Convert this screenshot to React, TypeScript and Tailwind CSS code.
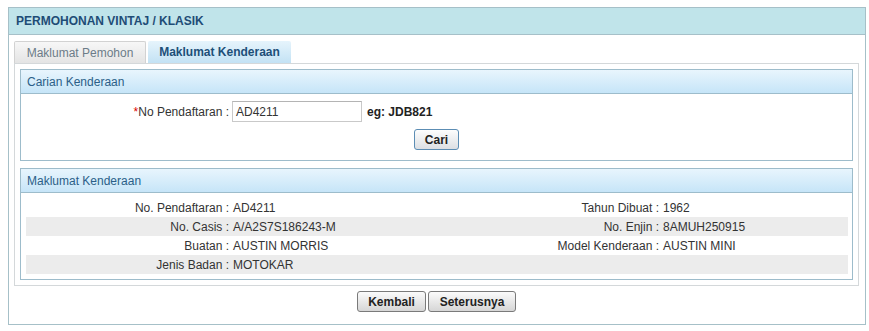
import React from "react";

const rows: [string, string, string, string][] = [
  ["No. Pendaftaran :", "AD4211", "Tahun Dibuat :", "1962"],
  ["No. Casis :", "A/A2S7S186243-M", "No. Enjin :", "8AMUH250915"],
  ["Buatan :", "AUSTIN MORRIS", "Model Kenderaan :", "AUSTIN MINI"],
  ["Jenis Badan :", "MOTOKAR", "", ""],
];

function FieldsetHeader({ title }: { title: string }) {
  return (
    <div className="flex h-[24px] items-center border-b border-[#9dbccb] bg-gradient-to-b from-[#e8f5fd] to-[#c6e5f8] pl-[6px] text-[12px] text-[#2b5f88]">
      {title}
    </div>
  );
}

function GrayButton({ label, width }: { label: string; width: string }) {
  return (
    <button
      className={`h-[21px] ${width} rounded-[3px] border border-[#7a7a7a] bg-gradient-to-b from-[#fbfbfb] to-[#d6d6d6] text-[12px] font-bold text-[#222]`}
    >
      {label}
    </button>
  );
}

export default function App() {
  return (
    <div className="h-[331px] w-[869px] bg-white pl-[8px] pt-[7px] font-['Liberation_Sans',Arial,sans-serif] text-[12px] text-[#333]">
      <div className="h-[318px] w-[858px] border border-[#a6c0c8]">
        <div className="flex h-[27px] items-center border-b border-[#a6c0c8] bg-[#c0e4ea] pl-[7px] text-[12px] font-bold text-[#1e4c76]">
          PERMOHONAN VINTAJ / KLASIK
        </div>

        <div className="pl-[5px] pt-[6px]">
          {/* tabs */}
          <div className="flex h-[22px] gap-[2px]">
            <div className="flex w-[132px] items-center justify-center rounded-t-[2px] border border-b-0 border-[#d2d2d2] bg-gradient-to-b from-[#f7f7f7] to-[#e4e4e4] text-[12px] text-[#6c7c88]">
              Maklumat Pemohon
            </div>
            <div className="flex w-[143px] items-center justify-center rounded-t-[2px] bg-gradient-to-b from-[#e6f4fc] to-[#c3e2f4] text-[12px] font-bold text-[#1d4f78]">
              Maklumat Kenderaan
            </div>
          </div>

          {/* tab panel */}
          <div className="h-[223px] w-[845px] border border-[#d4d8da] px-[5px] pt-[5px]">
            <div className="h-[92px] border border-[#9dbccb]">
              <FieldsetHeader title="Carian Kenderaan" />
              <div className="grid grid-cols-[205px_1fr] px-[5px] pt-[7px]">
                <div className="flex h-[21px] items-center justify-end pr-[2px]">
                  <span className="text-[#d00]">*</span>No Pendaftaran :
                </div>
                <div className="flex items-center pl-[1px]">
                  <div className="flex h-[21px] w-[130px] items-center border border-[#c9c9c9] border-t-[#b4b4b4] pl-[3px]">
                    AD4211
                  </div>
                  <span className="ml-[5px] font-bold text-[#222]">eg: JDB821</span>
                </div>
              </div>
              <div className="mt-[7px] flex justify-center">
                <button className="h-[21px] w-[45px] rounded-[3px] border border-[#5c8db4] bg-gradient-to-b from-[#fdfdfd] to-[#dcdfe3] text-[12px] font-bold text-[#222]">
                  Cari
                </button>
              </div>
            </div>

            <div className="mt-[7px] h-[112px] border border-[#9dbccb]">
              <FieldsetHeader title="Maklumat Kenderaan" />
              <div className="pl-[5px] pr-[4px] pt-[5px]">
                {rows.map((r, i) => (
                  <div
                    key={i}
                    className={`grid h-[19px] grid-cols-[205px_210px_220px_1fr] items-center ${
                      i % 2 === 1 ? "bg-[#ececec]" : ""
                    }`}
                  >
                    <div className="pr-[2px] text-right">{r[0]}</div>
                    <div className="pl-[2px]">{r[1]}</div>
                    <div className="pr-[2px] text-right">{r[2]}</div>
                    <div className="pl-[2px]">{r[3]}</div>
                  </div>
                ))}
              </div>
            </div>
          </div>

          <div className="mt-[5px] flex w-[845px] justify-center gap-[2px]">
            <GrayButton label="Kembali" width="w-[69px]" />
            <GrayButton label="Seterusnya" width="w-[88px]" />
          </div>
        </div>
      </div>
    </div>
  );
}
